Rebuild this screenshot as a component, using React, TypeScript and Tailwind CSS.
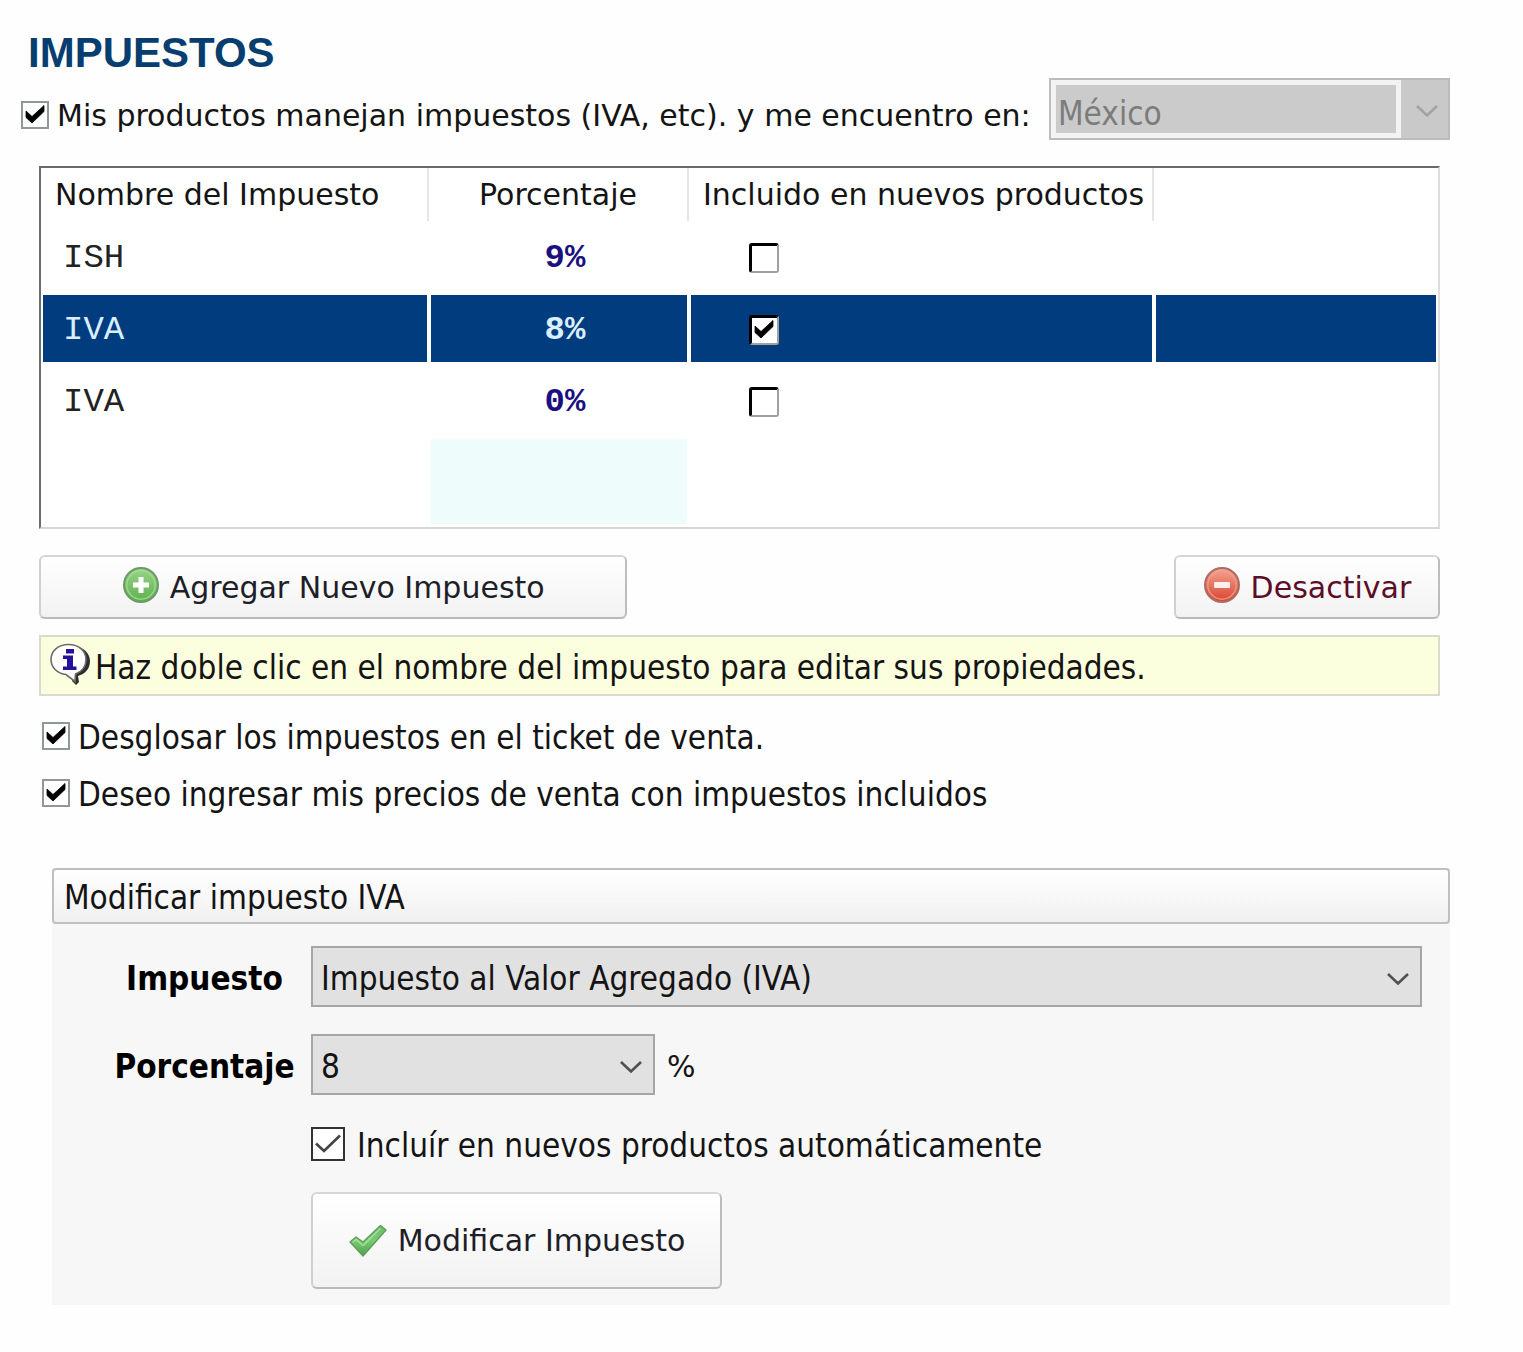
import type { ReactNode } from "react";

const wide = 'font-["DejaVu_Sans",sans-serif]';
const narrow = 'font-["DejaVu_Sans_Condensed","DejaVu_Sans",sans-serif]';

function BoldTick() {
  return (
    <svg viewBox="0 0 28 28" className="pointer-events-none col-start-1 row-start-1 size-7 opacity-0 peer-checked:opacity-100" aria-hidden="true">
      <path d="M5 10 L11 15.5 L23 4.5 V10.5 L11 22 L5 16.5 Z" fill="#000" stroke="#000" strokeWidth="0.8" strokeLinejoin="round" />
    </svg>
  );
}

function FlatCheck({ id }: { id: string }) {
  return (
    <span className="grid shrink-0 place-items-center">
      <input id={id} type="checkbox" defaultChecked className="peer col-start-1 row-start-1 size-7 appearance-none border-2 border-[#8f979b] bg-white" />
      <BoldTick />
    </span>
  );
}

function SunkenCheck({ label, checked }: { label: string; checked: boolean }) {
  return (
    <span className="inline-grid place-items-center align-middle">
      <input
        type="checkbox"
        aria-label={label}
        defaultChecked={checked}
        className="peer col-start-1 row-start-1 size-[30px] appearance-none rounded-[3px] border-t-3 border-r-2 border-b-2 border-l-3 border-t-black border-r-[#a0a0a0] border-b-[#a0a0a0] border-l-black bg-white"
      />
      <BoldTick />
    </span>
  );
}

function Chevron({ color }: { color: string }) {
  return (
    <svg viewBox="0 0 24 16" className="h-4 w-6" fill="none" aria-hidden="true">
      <path d="M2 3 L12 12.5 L22 3" stroke={color} strokeWidth="2.6" />
    </svg>
  );
}

function Combo({ id, value, width }: { id: string; value: string; width: string }) {
  return (
    <span className={"grid items-center " + width}>
      <select id={id} defaultValue={value} className="col-start-1 row-start-1 h-[61px] w-full appearance-none border-2 border-[#a6a6a6] bg-[#e1e1e1] pt-1 pr-12 pl-2 text-[33px] text-[#141414]">
        <option>{value}</option>
      </select>
      <span className="pointer-events-none col-start-1 row-start-1 mr-3 pt-1 justify-self-end">
        <Chevron color="#505050" />
      </span>
    </span>
  );
}

function PushButton({ className, children }: { className: string; children: ReactNode }) {
  return (
    <button type="button" className={"flex items-center justify-center gap-2.5 rounded-md border-2 border-t-[#d6d6d6] border-r-[#bdbdbd] border-b-[#b9b9b9] border-l-[#d0d0d0] bg-linear-to-b from-white to-[#f2f2f2] text-[30px] " + wide + " " + className}>
      {children}
    </button>
  );
}

function RoundIcon({ kind }: { kind: "add" | "remove" }) {
  const add = kind === "add";
  const gid = "fill-" + kind;
  return (
    <svg viewBox="0 0 38 38" className="-mt-1 size-[38px]" aria-hidden="true">
      <defs>
        <linearGradient id={gid} x1="0" y1="0" x2="0" y2="1">
          <stop offset="0" stopColor={add ? "#9ad48a" : "#f3a593"} />
          <stop offset="1" stopColor={add ? "#5db04c" : "#d9442f"} />
        </linearGradient>
      </defs>
      <circle cx="19" cy="19" r="17" fill={"url(#" + gid + ")"} stroke={add ? "#6c9a66" : "#b06a63"} strokeWidth="2" />
      <circle cx="19" cy="19" r="14.2" fill="none" stroke={add ? "#a6dc98" : "#f0a191"} strokeWidth="1.4" opacity="0.8" />
      {add ? (
        <path d="M16.5 11 h5 v5.5 h5.5 v5 h-5.5 v5.500 h-5 v-5.500 h-5.500 v-5 h5.500 z" fill="#fff" />
      ) : (
        <rect x="11" y="16" width="16" height="6" rx="1" fill="#fbeeee" />
      )}
    </svg>
  );
}

function InfoBubble() {
  return (
    <svg viewBox="0 0 42 42" className="-mt-2 h-[42px] w-[42px] shrink-0" aria-hidden="true">
      <path d="M25 2.5 C34 4 41 10 41 18 C41 26 36 31 29 33 L30 39 L27 42 L23 38 Z" fill="#2e2e2e" />
      <path d="M19.5 1.5 C30 1.5 37 8 37 16.5 C37 24 32 29 26.500 31 L26 38.500 L17 31.500 C8 30.500 2 24 2 16.500 C2 8 9 1.500 19.500 1.500 Z" fill="#fff" stroke="#6a6a6a" strokeWidth="1.600" />
      <path d="M17 6 h8 v4.500 h-8 z M14 12.500 h10 v11 h3.500 v3.500 h-13.500 v-3.500 h4 v-7.500 h-4 z" fill="#24129a" />
    </svg>
  );
}

function GreenTick() {
  return (
    <svg viewBox="0 0 40 34" className="h-[34px] w-10" aria-hidden="true">
      <defs>
        <linearGradient id="tick" x1="0" y1="0" x2="0" y2="1">
          <stop offset="0" stopColor="#6db868" />
          <stop offset="0.5" stopColor="#7ccb74" />
          <stop offset="1" stopColor="#4aa048" />
        </linearGradient>
      </defs>
      <path d="M2 18 L8 13 L15 18 L32.500 1.500 L38 6 L15 32 Z" fill="url(#tick)" stroke="#5d9f5b" strokeWidth="1.400" strokeLinejoin="round" />
      <path d="M5 18 L8 15.500 L15 21.500 L32.500 4.500" fill="none" stroke="#a9dfa2" strokeWidth="1.400" />
    </svg>
  );
}

const taxes = [
  { name: "ISH", rate: "9%", included: false, selected: false },
  { name: "IVA", rate: "8%", included: true, selected: true },
  { name: "IVA", rate: "0%", included: false, selected: false },
];

export default function App() {
  return (
    <main className={"min-h-screen bg-[#fefefe] pt-7 pb-11 text-[33px] text-[#141414] " + narrow}>
      <h1 className='pl-7 font-["Liberation_Sans",sans-serif] text-[42px] leading-[50px] font-bold text-[#083d70]'>IMPUESTOS</h1>

      <div className="flex items-center justify-between pr-[73px] pl-[21px]">
        <label htmlFor="maneja" className={"flex items-center gap-2 pt-3 text-[30px] whitespace-nowrap " + wide}>
          <FlatCheck id="maneja" />
          Mis productos manejan impuestos (IVA, etc). y me encuentro en:
        </label>
        <div className="flex h-[62px] w-[401px] shrink-0 items-center border-2 border-[#bcbcbc] bg-[#c9c9c9]">
          <select disabled aria-label="País" className="h-full flex-1 appearance-none border-[5px] border-[#f3f3f3] bg-[#cbcbcb] pt-1 pl-0.5 text-[33px] text-[#7c7c7c] opacity-100">
            <option>México</option>
          </select>
          <span className="flex w-[47px] justify-center pt-1 pl-1">
            <Chevron color="#a3a3a3" />
          </span>
        </div>
      </div>

      <section className="mt-[26px] mr-[83px] ml-[39px]">
        <div className="border-2 border-t-[#6b6b6b] border-r-[#dedede] border-b-[#d6d6d6] border-l-[#6b6b6b] bg-white">
          <table className="w-full table-fixed border-separate border-spacing-0">
            <colgroup>
              <col className="w-[388px]" />
              <col className="w-[260px]" />
              <col className="w-[465px]" />
              <col />
            </colgroup>
            <thead className={"text-[30px] " + wide}>
              <tr className="h-[53px]">
                <th className="border-r-2 border-[#e6e6e6] pl-3.5 text-left font-normal whitespace-nowrap">Nombre del Impuesto</th>
                <th className="border-r-2 border-[#e6e6e6] text-center font-normal">Porcentaje</th>
                <th className="border-r-2 border-[#e6e6e6] pl-3.5 text-left font-normal whitespace-nowrap">Incluido en nuevos productos</th>
                <td />
              </tr>
            </thead>
            <tbody className='font-["Liberation_Mono",monospace] text-[34px] [&_td]:border-x-2 [&_td]:border-t-2 [&_td]:border-b-3 [&_td]:border-white'>
              {taxes.map((t) => (
                <tr key={t.name + t.rate} className={t.selected ? "h-[72px] [&>td]:bg-[#003c7e] [&>td]:bg-clip-padding" : "h-[72px]"}>
                  <td className={t.selected ? "pt-1 pl-5 text-[#d9eeff]" : "pt-1 pl-5 text-[#222]"}>{t.name}</td>
                  <td className={t.selected ? "pt-1 pl-3 text-center font-bold text-[#d9eeff]" : "pt-1 pl-3 text-center font-bold text-[#1c1080]"}>{t.rate}</td>
                  <td className="pt-0.5 pl-[58px] leading-none">
                    <SunkenCheck label={"Incluir " + t.name + " " + t.rate} checked={t.included} />
                  </td>
                  <td />
                </tr>
              ))}
              <tr className="h-[90px]">
                <td />
                <td className="bg-[#effcfc] bg-clip-padding" />
                <td />
                <td />
              </tr>
            </tbody>
          </table>
        </div>

        <div className="mt-[26px] flex justify-between">
          <PushButton className="h-16 w-[42%] text-[#1e1e28]">
            <RoundIcon kind="add" />
            Agregar Nuevo Impuesto
          </PushButton>
          <PushButton className="h-16 w-[19%] text-[#5c0d28]">
            <RoundIcon kind="remove" />
            Desactivar
          </PushButton>
        </div>

        <p className="mt-4 flex h-[61px] items-center gap-1 border-2 border-[#d9dccd] bg-[#fbffdd] pt-1 pl-2 whitespace-nowrap">
          <InfoBubble />
          Haz doble clic en el nombre del impuesto para editar sus propiedades.
        </p>
      </section>

      <div className="mt-[11px] flex flex-col pl-[42px]">
        <label htmlFor="desglosar" className="flex h-[57px] items-center gap-2">
          <FlatCheck id="desglosar" />
          <span className="pt-1">Desglosar los impuestos en el ticket de venta.</span>
        </label>
        <label htmlFor="incluidos" className="flex h-[57px] items-center gap-2">
          <FlatCheck id="incluidos" />
          <span className="pt-1">Deseo ingresar mis precios de venta con impuestos incluidos</span>
        </label>
      </div>

      <form className="mt-[47px] mr-[73px] ml-[52px] bg-[#f7f7f7] pb-4">
        <h2 className="flex h-14 items-center rounded-sm border-2 border-[#bfbfbf] bg-linear-to-b from-white to-[#f0f0f0] pt-1 pl-2.5">Modificar impuesto IVA</h2>
        <div className="mt-[22px] grid grid-cols-[259px_1fr] items-center gap-y-[27px] pr-7">
          <label htmlFor="impuesto" className="pt-1 pl-[46px] text-center font-bold text-black">Impuesto</label>
          <Combo id="impuesto" value="Impuesto al Valor Agregado (IVA)" width="w-full" />

          <label htmlFor="porcentaje" className="pt-1 pl-[46px] text-center font-bold text-black">Porcentaje</label>
          <div className="flex items-center gap-3">
            <Combo id="porcentaje" value="8" width="w-[344px]" />
            <span className={"pt-1 text-[30px] " + wide}>%</span>
          </div>

          <label htmlFor="automatico" className="col-start-2 flex h-[43px] items-center gap-3">
            <span className="grid shrink-0 place-items-center">
              <input id="automatico" type="checkbox" defaultChecked className="peer col-start-1 row-start-1 size-[34px] appearance-none border-2 border-[#333] bg-white" />
              <svg viewBox="0 0 34 34" className="pointer-events-none col-start-1 row-start-1 size-[34px] opacity-0 peer-checked:opacity-100" fill="none" aria-hidden="true">
                <path d="M5 16.5 L13 24 L29 8.5" stroke="#444" strokeWidth="2.6" />
              </svg>
            </span>
            <span className="pt-1">Incluír en nuevos productos automáticamente</span>
          </label>

          <PushButton className="col-start-2 h-[97px] w-[411px] text-[#1e1e28]">
            <GreenTick />
            Modificar Impuesto
          </PushButton>
        </div>
      </form>
    </main>
  );
}
